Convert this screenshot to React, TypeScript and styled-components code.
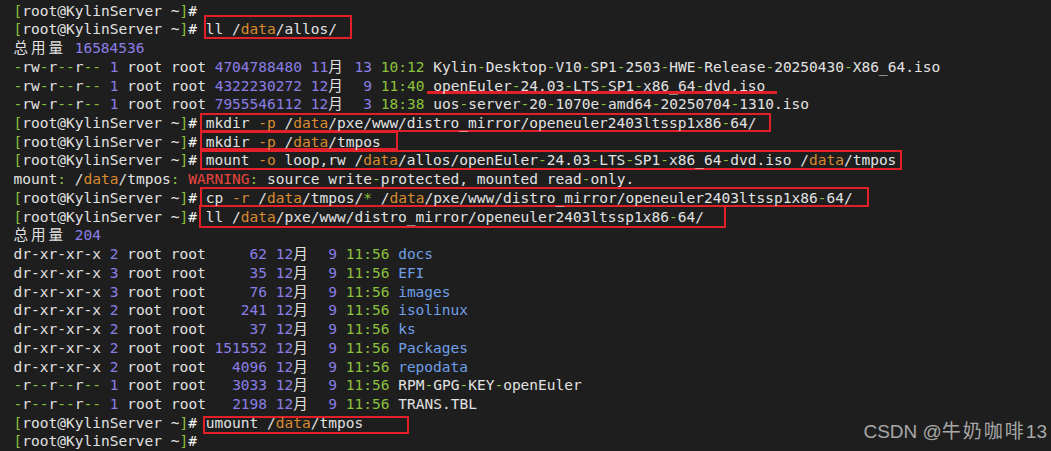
import React from 'react';
import styled, { createGlobalStyle } from 'styled-components';

const C = {
  bg: '#1e1e1e',
  fg: '#e2e2e2',
  white: '#f5f5f5',
  green: '#8cc13c',
  purple: '#8a7ee6',
  orange: '#d98b2e',
  blue: '#6f9fe6',
  red: '#e8463f',
  box: '#e3202a',
};

type Tone = 'fg' | 'white' | 'green' | 'purple' | 'orange' | 'blue' | 'red';
type Seg = [Tone, string];

const LH = 18.74;

const Global = createGlobalStyle`
  html, body { margin: 0; padding: 0; background: ${C.bg}; }
  #root { width: 1051px; height: 451px; }
`;

const Screen = styled.div`
  position: relative;
  z-index: 0;
  width: 1051px;
  height: 451px;
  box-sizing: border-box;
  padding: 1.6px 0 0 13.5px;
  background: ${C.bg};
  overflow: hidden;
  font-family: "DejaVu Sans Mono", "Noto Sans CJK SC", monospace;
  font-size: 14.53px;
  color: ${C.fg};
`;

const Line = styled.div`
  height: ${LH}px;
  line-height: ${LH}px;
  white-space: pre;
`;

const Tok = styled.span<{ $tone: Tone }>`
  color: ${(p) => C[p.$tone]};
`;

const Wide = styled.span`
  display: inline-block;
  width: 2ch;
  color: ${C.fg};
`;

const Mark = styled.span<{ $l: number; $r: number; $t: number; $b: number }>`
  position: relative;
  display: inline-block;
  height: ${LH}px;
  vertical-align: top;
  &::after {
    content: '';
    position: absolute;
    z-index: -1;
    left: ${(p) => p.$l}px;
    right: ${(p) => -p.$r}px;
    top: ${(p) => p.$t}px;
    bottom: ${(p) => -p.$b}px;
    border: 2px solid ${C.box};
    pointer-events: none;
  }
`;

const Under = styled.span`
  position: relative;
  display: inline-block;
  height: ${LH}px;
  vertical-align: top;
  &::after {
    content: '';
    position: absolute;
    z-index: -1;
    left: -6px;
    right: -12px;
    top: 14.2px;
    height: 3px;
    background: ${C.box};
    pointer-events: none;
  }
`;

const Watermark = styled.div`
  position: absolute;
  right: 4px;
  bottom: 8px;
  font-family: "Liberation Sans", "Noto Sans CJK SC", sans-serif;
  font-size: 19px;
  line-height: 22px;
  color: #a8a8a8;
  white-space: pre;
`;

const Han = styled.span`
  letter-spacing: 2px;
`;

const segs = (list: Seg[]) =>
  list.map(([t, s], i) => (
    <Tok key={i} $tone={t}>
      {s}
    </Tok>
  ));

const hy = (s: string): Seg[] =>
  s
    .split(/(-)/)
    .filter(Boolean)
    .map((x) => (x === '-' ? ['green', x] : ['fg', x]) as Seg);

const path = (s: string): Seg[] => {
  const out: Seg[] = [];
  s.split(/(\/data(?=\/|$)|-|\*)/)
    .filter(Boolean)
    .forEach((x) => {
      if (x === '/data') {
        out.push(['fg', '/']);
        out.push(['orange', 'data']);
      } else if (x === '-' || x === '*') out.push(['green', x]);
      else out.push(['fg', x]);
    });
  return out;
};

const Hanzi = ({ s }: { s: string }) => (
  <>
    {s.split('').map((c, i) => (
      <Wide key={i}>{c}</Wide>
    ))}
  </>
);

const Prompt = () => (
  <>
    <Tok $tone="green">[</Tok>
    root@KylinServer ~<Tok $tone="green">]</Tok>
    <Tok $tone="white">#</Tok>{' '}
  </>
);

type EntryProps = {
  perm: string;
  links: string;
  size: string;
  width: number;
  month: string;
  day: string;
  time: string;
  name: string;
  dir?: boolean;
  underline?: boolean;
};

const Entry = ({ perm, links, size, width, month, day, time, name, dir, underline }: EntryProps) => {
  const nameNode = dir ? <Tok $tone="blue">{name}</Tok> : segs(hy(name));
  return (
    <Line>
      {perm.startsWith('-') ? segs(hy(perm)) : perm} <Tok $tone="purple">{links}</Tok> root root{' '}
      <Tok $tone="purple">{size.padStart(width)}</Tok> <Tok $tone="purple">{month}</Tok>
      <Hanzi s="月" /> <Tok $tone="purple">{day.padStart(2)}</Tok> <Tok $tone="green">{time}</Tok>{' '}
      {underline ? <Under>{nameNode}</Under> : nameNode}
    </Line>
  );
};

const Total = ({ n }: { n: string }) => (
  <Line>
    <Hanzi s="总用量" /> <Tok $tone="purple">{n}</Tok>
  </Line>
);

const dirRows: Array<[string, string, string, string, boolean]> = [
  ['dr-xr-xr-x', '2', '62', 'docs', true],
  ['dr-xr-xr-x', '3', '35', 'EFI', true],
  ['dr-xr-xr-x', '3', '76', 'images', true],
  ['dr-xr-xr-x', '2', '241', 'isolinux', true],
  ['dr-xr-xr-x', '2', '37', 'ks', true],
  ['dr-xr-xr-x', '2', '151552', 'Packages', true],
  ['dr-xr-xr-x', '2', '4096', 'repodata', true],
  ['-r--r--r--', '1', '3033', 'RPM-GPG-KEY-openEuler', false],
  ['-r--r--r--', '1', '2198', 'TRANS.TBL', false],
];

const MIRROR = '/data/pxe/www/distro_mirror/openeuler2403ltssp1x86-64/';

export default function App() {
  return (
    <>
      <Global />
      <Screen>
        <Line>
          <Prompt />
        </Line>
        <Line>
          <Prompt />
          <Mark $l={-2} $r={15.5} $t={-5.4} $b={0}>
            ll {segs(path('/data/allos/'))}
          </Mark>
        </Line>
        <Total n="16584536" />
        <Entry perm="-rw-r--r--" links="1" size="4704788480" width={10} month="11" day="13" time="10:12"
          name="Kylin-Desktop-V10-SP1-2503-HWE-Release-20250430-X86_64.iso" />
        <Entry perm="-rw-r--r--" links="1" size="4322230272" width={10} month="12" day="9" time="11:40"
          name="openEuler-24.03-LTS-SP1-x86_64-dvd.iso" underline />
        <Entry perm="-rw-r--r--" links="1" size="7955546112" width={10} month="12" day="3" time="18:38"
          name="uos-server-20-1070e-amd64-20250704-1310.iso" />
        <Line>
          <Prompt />
          <Mark $l={-6} $r={14.75} $t={-1} $b={-0.5}>
            mkdir <Tok $tone="orange">-p</Tok> {segs(path(MIRROR))}
          </Mark>
        </Line>
        <Line>
          <Prompt />
          <Mark $l={-6} $r={17} $t={-1.8} $b={-1}>
            mkdir <Tok $tone="orange">-p</Tok> {segs(path('/data/tmpos'))}
          </Mark>
        </Line>
        <Line>
          <Prompt />
          <Mark $l={-6} $r={5.75} $t={-1.5} $b={0}>
            mount <Tok $tone="orange">-o</Tok> loop,rw {segs(path('/data/allos/openEuler-24.03-LTS-SP1-x86_64-dvd.iso'))}{' '}
            {segs(path('/data/tmpos'))}
          </Mark>
        </Line>
        <Line>
          mount<Tok $tone="green">:</Tok> {segs(path('/data/tmpos'))}
          <Tok $tone="green">:</Tok> <Tok $tone="red">WARNING</Tok>
          <Tok $tone="green">:</Tok> source write<Tok $tone="green">-</Tok>protected, mounted read
          <Tok $tone="green">-</Tok>only.
        </Line>
        <Line>
          <Prompt />
          <Mark $l={-6} $r={16.5} $t={-2} $b={-0.5}>
            cp <Tok $tone="orange">-r</Tok> {segs(path('/data/tmpos/*'))} {segs(path(MIRROR))}
          </Mark>
        </Line>
        <Line>
          <Prompt />
          <Mark $l={-7} $r={22} $t={-3} $b={1.5}>
            ll {segs(path(MIRROR))}
          </Mark>
        </Line>
        <Total n="204" />
        {dirRows.map(([perm, links, size, name, dir]) => (
          <Entry key={name} perm={perm} links={links} size={size} width={6} month="12" day="9" time="11:56"
            name={name} dir={dir} />
        ))}
        <Line>
          <Prompt />
          <Mark $l={-3} $r={45.5} $t={2} $b={2}>
            umount {segs(path('/data/tmpos'))}
          </Mark>
        </Line>
        <Line>
          <Prompt />
        </Line>
        <Watermark>
          CSDN @<Han>牛奶咖啡</Han>13
        </Watermark>
      </Screen>
    </>
  );
}
